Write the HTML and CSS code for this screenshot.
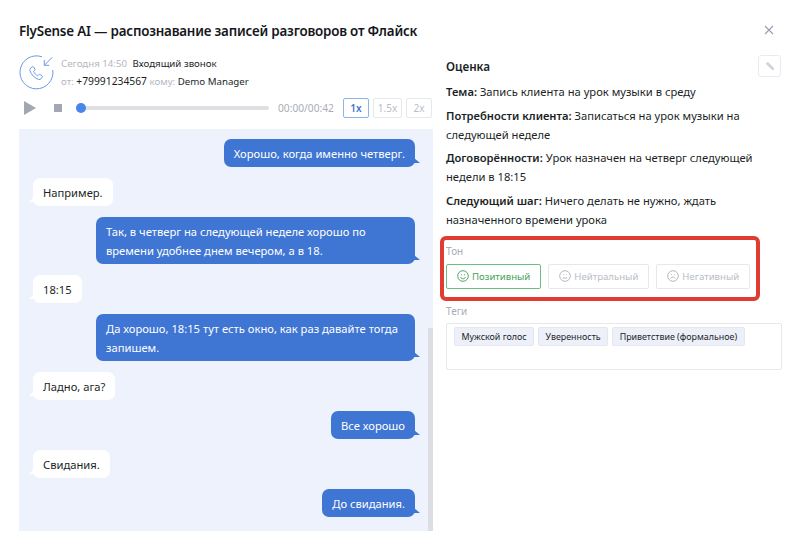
FILE: index.html
```html
<!DOCTYPE html>
<html lang="ru">
<head>
<meta charset="utf-8">
<title>FlySense AI</title>
<link rel="stylesheet" href="styles.css">
</head>
<body>
<div class="modal">
  <header class="head">
    <h1>FlySense AI — распознавание записей разговоров от Флайск</h1>
    <svg class="close" viewBox="0 0 10 10"><path d="M1 1l8 8M9 1l-8 8"/></svg>
  </header>
  <div class="cols">
    <section class="left">
      <div class="call">
        <svg class="call-icon" width="36" height="36" viewBox="0 0 36 36" fill="none">
          <path d="M23 1.800A16.500 16.500 0 1 0 33.800 15" />
          <path d="M33.300 2.300l-8 8M25.300 5v5.300h5" />
          <path d="M11.500 13.200l1.800-1.300c.6-.4 1.200-.3 1.500.3l1 1.800c.3.500.2 1-.2 1.400l-1 .9c.8 2 2.200 3.500 4 4.500l1-1c.4-.4 1-.5 1.500-.2l1.800 1.100c.6.300.7 1 .3 1.500l-1.300 1.700c-.5.600-1.300.8-2 .6-4.500-1.500-7.500-4.500-9-9-.2-.8 0-1.600.6-2.300z"/>
        </svg>
        <div class="call-text">
          <div class="line"><span class="muted">Сегодня 14:50</span> <span class="gap">Входящий звонок</span></div>
          <div class="line"><span class="muted">от:</span> <span class="phone">+79991234567</span> <span class="muted">кому:</span> Demo Manager</div>
        </div>
      </div>
      <div class="player">
        <svg class="play" width="12" height="14" viewBox="0 0 12 14"><path d="M0 0l12 7-12 7z"/></svg>
        <span class="stop"></span>
        <div class="track"><span class="knob"></span></div>
        <span class="time">00:00/00:42</span>
        <div class="speeds">
          <span class="speed on">1x</span>
          <span class="speed wide">1.5x</span>
          <span class="speed">2x</span>
        </div>
      </div>
      <div class="chat">
        <div class="msg out">Хорошо, когда именно четверг.</div>
        <div class="msg in">Например.</div>
        <div class="msg out">Так, в четверг на следующей неделе хорошо по времени удобнее днем вечером, а в 18.</div>
        <div class="msg in">18:15</div>
        <div class="msg out">Да хорошо, 18:15 тут есть окно, как раз давайте тогда запишем.</div>
        <div class="msg in">Ладно, ага?</div>
        <div class="msg out">Все хорошо</div>
        <div class="msg in">Свидания.</div>
        <div class="msg out">До свидания.</div>
        <span class="scroll"></span>
      </div>
    </section>
    <section class="right">
      <div class="rate-head">
        <h2>Оценка</h2>
        <span class="edit">
          <svg width="10" height="10" viewBox="0 0 11 11"><path d="M3 .8L.8 3l6.600 6.600 2.800.6-.6-2.800z"/></svg>
        </span>
      </div>
      <p class="item"><b>Тема:</b> Запись клиента на урок музыки в среду</p>
      <p class="item"><b>Потребности клиента:</b> Записаться на урок музыки на следующей неделе</p>
      <p class="item"><b>Договорённости:</b> Урок назначен на четверг следующей недели в 18:15</p>
      <p class="item"><b>Следующий шаг:</b> Ничего делать не нужно, ждать назначенного времени урока</p>
      <div class="tone-box">
        <div class="label">Тон</div>
        <div class="tones">
          <span class="tone pos">
            <svg viewBox="0 0 12 12"><circle cx="6" cy="6" r="5.300"/><path d="M3.500 7c.5 1.200 1.400 1.800 2.500 1.800S8 8.200 8.500 7"/><path class="eye" d="M4 4.300h.9v1H4zM7.100 4.300H8v1h-.9z"/></svg>Позитивный</span>
          <span class="tone">
            <svg viewBox="0 0 12 12"><circle cx="6" cy="6" r="5.300"/><path d="M3.700 8h4.600"/><path class="eye" d="M4 4.300h.9v1H4zM7.100 4.300H8v1h-.9z"/></svg>Нейтральный</span>
          <span class="tone">
            <svg viewBox="0 0 12 12"><circle cx="6" cy="6" r="5.300"/><path d="M3.500 8.700c.5-1.100 1.400-1.600 2.500-1.600s2 .5 2.500 1.600"/><path class="eye" d="M4 4.300h.9v1H4zM7.100 4.300H8v1h-.9z"/></svg>Негативный</span>
        </div>
      </div>
      <div class="label tags-label">Теги</div>
      <div class="tags">
        <span class="tag">Мужской голос</span>
        <span class="tag">Уверенность</span>
        <span class="tag">Приветствие (формальное)</span>
      </div>
    </section>
  </div>
</div>
</body>
</html>
```
FILE: styles.css
```css
* { box-sizing: border-box; }
html, body { margin: 0; height: 100%; background: #fff; }
body { font-family: "Noto Sans", sans-serif; color: #1c1f26; font-size: 11px; overflow: hidden; }
.modal { width: 800px; height: 549px; padding: 20px 18px 0 19px; }
.head { display: flex; justify-content: space-between; align-items: center; height: 22px; }
h1 { margin: 0; font-size: 13.400px; letter-spacing: -.2px; font-weight: 600; line-height: 22px; color: #15171c; }
.close { width: 10px; height: 10px; margin: -3px 8px 0 0; fill: none; stroke: #9a9db0; stroke-width: 1.100; }
.cols { display: flex; gap: 13px; margin-top: 13px; }
.left { width: 414px; flex: none; }
.right { width: 336px; flex: none; }
.call { display: flex; height: 36px; }
.call-icon { flex: none; stroke: #6a9be6; stroke-width: 1; }
.call-text { margin-left: 6px; }
.line { height: 18px; line-height: 17px; font-size: 9.700px; white-space: nowrap; }
.phone { font-size: 10.300px; }
.muted { color: #b3b7c0; }
.gap { margin-left: 3px; }
.player { display: flex; align-items: center; height: 20px; margin-top: 7px; }
.play { fill: #a3a7b3; margin-left: 5px; flex: none; }
.stop { width: 8px; height: 8px; background: #a3a7b3; margin-left: 18px; flex: none; }
.track { position: relative; width: 193px; height: 4px; border-radius: 2px; background: #dfe0e3; margin-left: 14px; flex: none; }
.knob { position: absolute; left: 0; top: -3px; width: 10px; height: 10px; border-radius: 50%; background: #4a86ea; }
.time { margin-left: 9px; color: #a9adb7; font-size: 10.200px; white-space: nowrap; width: 56px; flex: none; }
.speeds { display: flex; gap: 4px; margin-left: 9px; }
.speed { width: 26px; height: 20px; border: 1px solid #e6e8ec; border-radius: 2px; color: #b9bcc6; font-size: 10px; line-height: 18px; text-align: center; }
.speed.wide { width: 29px; }
.speed.on { border-color: #8eb4ec; color: #3f74cf; font-weight: 600; }
.chat { position: relative; display: flex; flex-direction: column; gap: 11px; align-items: flex-start; height: 402px; margin-top: 11px; padding: 10px 18px 0 14px; background: #eef2fd; }
.msg { position: relative; padding: 4.500px 10px; max-width: 319px; font-size: 11.200px; line-height: 19px; border-radius: 7px; }
.msg.in { background: #fff; color: #1c1f26; }
.msg.out { align-self: flex-end; background: #3f75d3; color: #fff; }
.msg::after { content: ""; position: absolute; bottom: 4px; width: 0; height: 0; border-style: solid; }
.msg.out::after { right: -5px; border-width: 5px 0 0 6px; border-color: transparent transparent transparent #3f75d3; }
.msg.in::after { left: -4px; border-width: 5px 5px 0 0; border-color: transparent #fff transparent transparent; }
.scroll { position: absolute; right: 0; bottom: 0; width: 5px; height: 203px; background: #dcdee3; }
.rate-head { display: flex; justify-content: space-between; align-items: flex-start; height: 27px; }
h2 { margin: 0; padding-top: 2px; font-size: 11.700px; line-height: 19px; font-weight: 600; }
.edit { display: flex; align-items: center; justify-content: center; width: 23px; height: 22px; margin-right: 1px; border: 1px solid #e9ebee; border-radius: 3px; }
.edit svg { fill: #d2d4da; }
.item { margin: 0 0 4.500px; font-size: 11.200px; line-height: 19px; }
.item b { font-weight: 600; }
.tone-box { width: 320px; height: 65px; margin: 7.500px 0 0 -6px; padding: 4px 0 0 2px; border: 4px solid #e03c31; border-radius: 6px; }
.label { color: #a9adb7; font-size: 10px; line-height: 14px; }
.tones { display: flex; gap: 7px; margin-top: 5.500px; }
.tone { display: flex; align-items: center; justify-content: center; height: 25px; padding: 0 10px; border: 1px solid #e6e8ec; border-radius: 2px; color: #b9bcc6; font-size: 9.600px; white-space: nowrap; }
.tone svg { width: 12px; height: 12px; margin-right: 3px; fill: none; stroke: #aeb1bb; stroke-width: .9; }
.tone .eye { fill: currentColor; stroke: none; }
.tone.pos { border-color: #6cbf80; color: #3fa257; }
.tone.pos svg { stroke: #3fa257; }
.tags-label { margin-top: 3px; }
.tags { display: flex; gap: 4px; align-items: flex-start; height: 47px; margin-top: 5px; padding: 3px 7px; border: 1px solid #e6e8ec; border-radius: 2px; }
.tag { height: 19px; padding: 0 6.500px; background: #edf0f8; border: 1px solid #e4e7f0; border-radius: 2px; font-size: 8.900px; line-height: 17px; white-space: nowrap; color: #22252c; }
```
